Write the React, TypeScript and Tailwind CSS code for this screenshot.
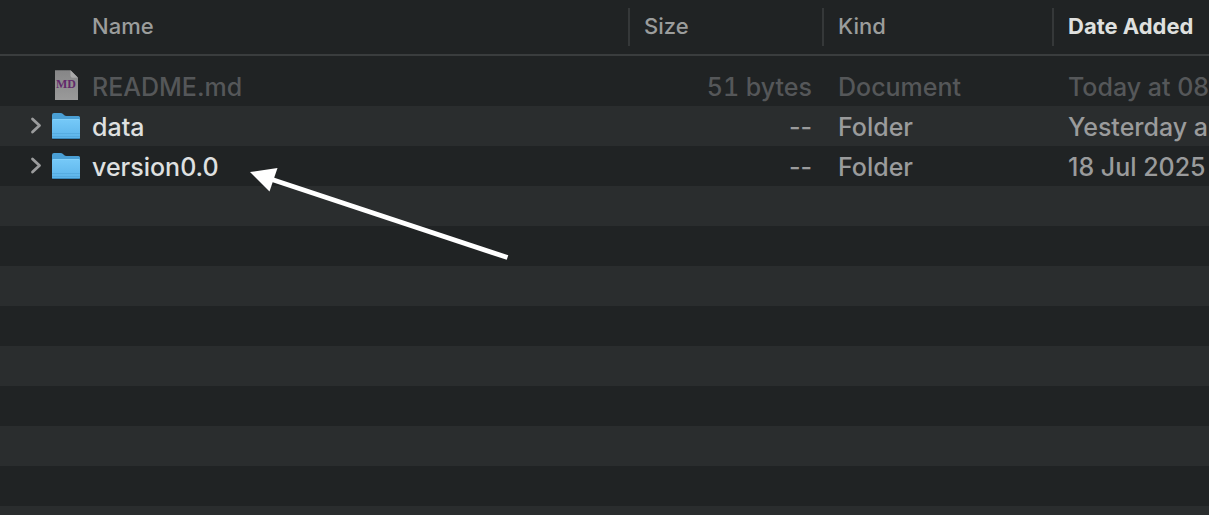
type Entry = {
  name: string;
  size: string;
  kind: string;
  added: string;
  folder: boolean;
};

const entries: Entry[] = [
  { name: "README.md", size: "51 bytes", kind: "Document", added: "Today at 08", folder: false },
  { name: "data", size: "--", kind: "Folder", added: "Yesterday a", folder: true },
  { name: "version0.0", size: "--", kind: "Folder", added: "18 Jul 2025", folder: true },
];

function DocumentIcon() {
  return (
    <svg className="h-8 w-7 shrink-0" viewBox="0 0 28 32" aria-hidden="true">
      <defs>
        <linearGradient id="page" x1="0" y1="0" x2="0" y2="1">
          <stop offset="0" stopColor="#868687" />
          <stop offset="1" stopColor="#9a9a9a" />
        </linearGradient>
      </defs>
      <path d="M3 0.300H18.500L26 7.800V30H3Z" fill="url(#page)" />
      <path d="M18.500 0.300L26 7.800H20.500Q18.500 7.800 18.500 5.800Z" fill="#a9a9a9" />
      <text
        x="14"
        y="18"
        textAnchor="middle"
        fontFamily="'Liberation Serif', serif"
        fontWeight="700"
        fontSize="12"
        fill="#622a6b"
      >
        MD
      </text>
    </svg>
  );
}

function FolderIcon() {
  return (
    <svg className="h-8 w-7 shrink-0" viewBox="0 0 28 32" aria-hidden="true">
      <defs>
        <linearGradient id="front" x1="0" y1="0" x2="0" y2="1">
          <stop offset="0" stopColor="#76c9f8" />
          <stop offset="1" stopColor="#5cb4ea" />
        </linearGradient>
      </defs>
      <path d="M0 6H28V28.500Q28 30 26.500 30H1.500Q0 30 0 28.500Z" fill="#15191b" opacity="0.5" />
      <path
        d="M0 5Q0 3 2 3H8.500Q10 3 11 4L12 5Q13 6 14.500 6H26.500Q28 6 28 7.500V27.500Q28 29 26.500 29H1.500Q0 29 0 27.500Z"
        fill="#4a9fd4"
      />
      <path d="M0 10Q0 9 1.500 9H26.500Q28 9 28 10V27.500Q28 28.500 26.500 28.500H1.500Q0 28.500 0 27.500Z" fill="url(#front)" />
      <path d="M1 9.500H27" stroke="#84d0f8" />
      <path d="M0 23.500H28M0 26.500H28" stroke="#4da3d8" strokeWidth="0.6" />
      <path d="M1 28.500H27" stroke="#3a86b8" />
    </svg>
  );
}

function Chevron() {
  return (
    <svg className="h-[18px] w-3" viewBox="0 0 12 18" fill="none" aria-hidden="true">
      <path d="M2.500 2L9.500 8.500L2.500 15" stroke="#9b9c9d" strokeWidth="2.800" strokeLinecap="round" strokeLinejoin="round" />
    </svg>
  );
}

function Pointer() {
  return (
    <svg
      className="pointer-events-none absolute top-[160px] left-[240px] h-[110px] w-[280px]"
      viewBox="0 0 280 110"
      aria-hidden="true"
    >
      <path d="M32 19.500L267.500 97.500" stroke="#fff" strokeWidth="5" />
      <path d="M10 12L37.500 8L29.500 31.500Z" fill="#fff" />
    </svg>
  );
}

export default function App() {
  return (
    <main className="relative flex min-h-screen flex-col overflow-hidden bg-[#202324] font-['Inter','Liberation_Sans',sans-serif]">
      <table className="w-full table-fixed border-separate border-spacing-0 text-left whitespace-nowrap">
        <colgroup>
          <col />
          <col className="w-[194px]" />
          <col className="w-[230px]" />
          <col className="w-[157px]" />
        </colgroup>
        <thead className="text-[22px] leading-9 text-[#9b9d9c]">
          <tr className="h-14">
            <th scope="col" className="border-b-2 border-[#3a3d3e] p-0 font-medium">
              <div className="pb-[2px] pl-[92px]">Name</div>
            </th>
            <th scope="col" className="border-b-2 border-[#3a3d3e] p-0 font-medium">
              <div className="border-l-2 border-[#353839] pb-[2px] pl-[14px]">Size</div>
            </th>
            <th scope="col" className="border-b-2 border-[#3a3d3e] p-0 font-medium">
              <div className="border-l-2 border-[#353839] pb-[2px] pl-[14px]">Kind</div>
            </th>
            <th scope="col" aria-sort="descending" className="border-b-2 border-[#3a3d3e] p-0 font-bold text-[#dfe0df]">
              <div className="border-l-2 border-[#353839] pb-[2px] pl-[14px]">Date Added</div>
            </th>
          </tr>
        </thead>
        <tbody className="text-[25px] leading-[38px] font-medium before:block before:h-[10px]">
          {entries.map((entry) => (
            <tr
              key={entry.name}
              className={entry.folder ? "h-10 text-[#9a9b9c] even:bg-[#2a2d2e]" : "h-10 text-[#555759]"}
            >
              <td className="p-0">
                <div className="flex h-10 items-center">
                  {entry.folder ? (
                    <button type="button" aria-label={`Expand ${entry.name}`} className="flex w-[52px] justify-end pr-[10px]">
                      <Chevron />
                    </button>
                  ) : (
                    <span className="w-[52px]" />
                  )}
                  {entry.folder ? <FolderIcon /> : <DocumentIcon />}
                  <span className={entry.folder ? "pt-[2px] pl-3 text-[#dfe0e0]" : "pt-[2px] pl-3"}>{entry.name}</span>
                </div>
              </td>
              <td className={entry.folder ? "p-0 pt-[2px] pr-[10px] text-right" : "p-0 pt-[2px] pr-[10px] text-right tabular-nums"}>
                {entry.size}
              </td>
              <td className="p-0 pt-[2px] pl-4">{entry.kind}</td>
              <td className="overflow-hidden p-0 pt-[2px] pl-4">{entry.added}</td>
            </tr>
          ))}
        </tbody>
      </table>
      <div className="flex-1 bg-[repeating-linear-gradient(to_bottom,#2a2d2e_0px,#2a2d2e_40px,#202324_40px,#202324_80px)]" />
      <Pointer />
    </main>
  );
}
